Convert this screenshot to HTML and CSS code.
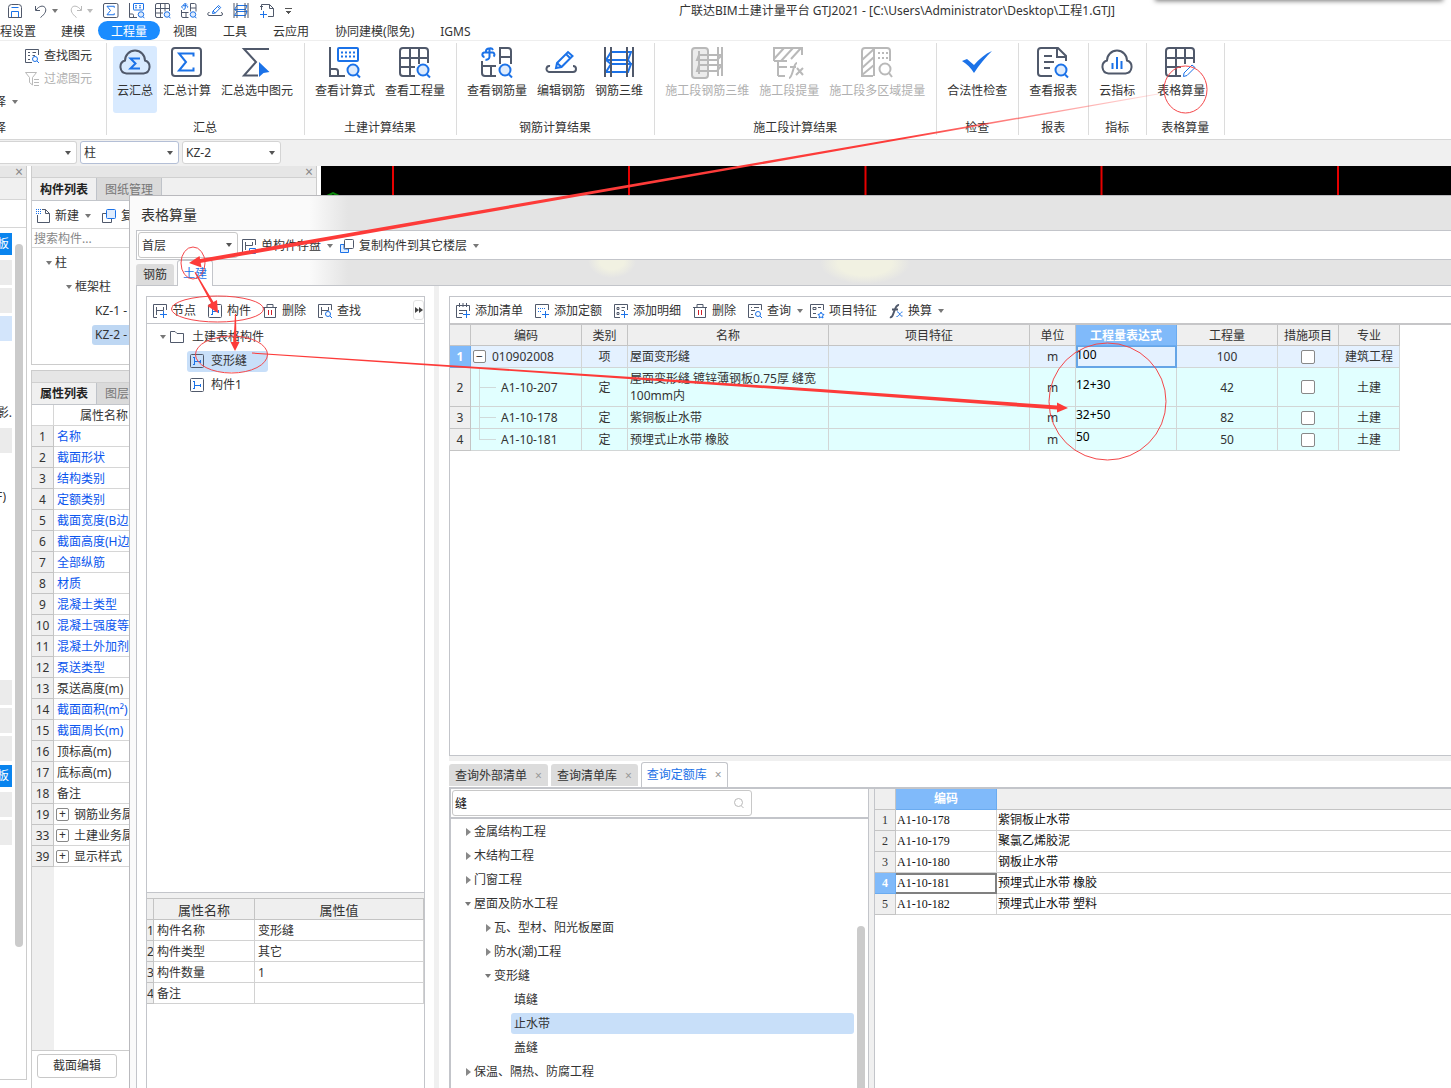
FILE: index.html
```html
<!DOCTYPE html>
<html lang="zh-CN">
<head>
<meta charset="utf-8">
<title>广联达BIM土建计量平台 GTJ2021</title>
<link rel="stylesheet" href="styles.css">
</head>
<body>
<svg class="defs" aria-hidden="true">
  <defs>
    <symbol id="mag" viewBox="0 0 32 32"><circle class="b tint" cx="24" cy="23" r="5.5"/><path class="b" d="M28 27.5l3 3"/></symbol>
    <symbol id="cloud-sigma" viewBox="0 0 32 32"><path class="d" d="M7.500 26.500A6.700 6.700 0 0 1 6 13.500A10 10 0 0 1 26 13.500A6.700 6.700 0 0 1 24.500 26.500Z"/><path class="b" d="M20 12.500V11.500H11.500L16.500 16.500L11.500 21.500H20V20.500"/></symbol>
    <symbol id="cloud-bars" viewBox="0 0 32 32"><path class="d" d="M7.500 26.500A6.700 6.700 0 0 1 6 13.500A10 10 0 0 1 26 13.500A6.700 6.700 0 0 1 24.500 26.500Z"/><path class="b" d="M11.500 16V22M16 10V22M20.500 14V22"/></symbol>
    <symbol id="sigma-box" viewBox="0 0 32 32"><rect class="d" x="1" y="1" width="29" height="28" rx="3"/><path class="b" d="M22.500 9.500V6.500H8L15 15L8 23.500H22.500V20.500"/></symbol>
    <symbol id="sigma-pick" viewBox="0 0 32 32"><path class="d" d="M28 2H3L15 15L3 28.500H17"/><path class="bf" d="M18 15L28.500 25L22.500 26L18 30Z"/></symbol>
    <symbol id="calc" viewBox="0 0 32 32"><path class="d" d="M1 0V29H16M1 22H6.500A2.500 2.500 0 0 1 9 24.500V29"/><rect class="b" x="9" y="1" width="20" height="13" rx="1"/><path class="b dots" d="M12 5.500H27M12 9.500H27"/><use href="#mag"/></symbol>
    <symbol id="grid-mag" viewBox="0 0 32 32"><path class="d" d="M16 29H4A3 3 0 0 1 1 26V4A3 3 0 0 1 4 1H26A3 3 0 0 1 29 4V16M1 11H29M1 20H16M11 1V29M20 1V17"/><use href="#mag"/></symbol>
    <symbol id="grid-pen" viewBox="0 0 32 32"><path class="d" d="M16 29H4A3 3 0 0 1 1 26V4A3 3 0 0 1 4 1H26A3 3 0 0 1 29 4V16M1 11H29M1 20H16M11 1V29M20 1V17"/><path class="b thin" d="M19 26L27 18L30 20.500L22 28.500L18.500 29.500Z"/></symbol>
    <symbol id="rebar-mag" viewBox="0 0 32 32"><path class="b" d="M5 5A3 3 0 0 1 8.500 1.500V10A3 3 0 0 1 4.500 12.500M3.500 10A2.300 2.300 0 0 1 3 5.500H12A2.300 2.300 0 0 1 12.500 9.500M8.500 1.500A3 3 0 0 1 12 3"/><path class="d" d="M19 17V1H27A3 3 0 0 1 30 4V17M19 10H30M1 14V26A3 3 0 0 0 4 29H15M1 19H15M10 19V29"/><use href="#mag"/></symbol>
    <symbol id="pen-bar" viewBox="0 0 32 32"><path class="b" d="M12 16L23 5L27.500 9L16.500 20L11 21Z M21 7L25 11M12 16L16.500 20"/><path class="d" d="M5 19A3 3 0 0 0 4 25H28A3 3 0 0 0 28 19"/></symbol>
    <symbol id="rebar-3d" viewBox="0 0 32 32"><path class="b" d="M8 5H28L25 13H3ZM8 17H28L25 25H3ZM3 13L8 17M25 13L28 17"/><path class="d" d="M2 0V30M8 0V30M24 0V30M30 0V30"/></symbol>
    <symbol id="seg-3d" viewBox="0 0 32 32"><rect class="g gt" x="1" y="1" width="16" height="30" rx="3"/><path class="g" d="M8 8H31L26 13H6ZM8 18H31L26 24H6ZM8 4V27M17 4V27M27 0V29M31 0V29"/></symbol>
    <symbol id="seg-fx" viewBox="0 0 32 32"><path class="g" d="M1 14V1H29V8M1 12L11 1M8 14L20 1M18 12L28 1M1 14H14M5 14V29M5 20H14M5 29H12"/><path class="g" d="M16 31C20 31 20 16 24 16M17 20H23M24 21L30 28M30 21L23 28"/></symbol>
    <symbol id="seg-multi" viewBox="0 0 32 32"><path class="g" d="M12 29H1V4A3 3 0 0 1 4 1H26A3 3 0 0 1 29 4V14M13 1V29M1 13L13 2M1 21L13 10M1 28L13 18"/><path class="g dots" d="M17 6H27M17 11H27"/><circle class="g" cx="24" cy="22" r="5.500"/><path class="g" d="M28 26L31 30"/></symbol>
    <symbol id="check" viewBox="0 0 32 32"><path class="bf" d="M1 14L6 12L13 18C18 12 24 7 31 4C25 10 18 18 13 26C10 21 6 17 1 14Z"/></symbol>
    <symbol id="report-mag" viewBox="0 0 32 32"><path class="d" d="M15 29H4A3 3 0 0 1 1 26V4A3 3 0 0 1 4 1H21L29 9V14M20 1V10H29M7 9H15M7 15H17M7 21H13"/><use href="#mag"/></symbol>
    <symbol id="save" viewBox="0 0 16 16"><path class="d" d="M1.500 4.500A3 3 0 0 1 4.500 1.500H11.500A3 3 0 0 1 14.500 4.500V14.500H1.500Z"/><path class="b" d="M4.500 14V8.500H11.500V14M4.500 4.500H11.500"/></symbol>
    <symbol id="undo" viewBox="0 0 16 16"><path class="d" d="M2.500 3V7.500H7M3 7C6 3 10 2 12 4.500C14 7.500 12 11 7.500 14.500"/></symbol>
    <symbol id="redo" viewBox="0 0 16 16"><path class="g" d="M13.500 3V7.500H9M13 7C10 3 6 2 4 4.500C2 7.500 4 11 8.500 14.500"/></symbol>
    <symbol id="page-plus" viewBox="0 0 16 16"><path class="d" d="M2.500 7V1.500H10.500L14.500 5.500V13.500H9M10.500 1.500V5.500H14.500M1 3.500H4"/><path class="b" d="M4.500 8V15M1 11.500H8"/></symbol>
    <symbol id="find-el" viewBox="0 0 16 16"><path class="d" d="M8 14.500H1.500V1.500H14.500V7M4 4.500H6M4 7.500H6M4 11.500H6M8.500 4.500H12M8.500 7.500H11"/><circle class="b" cx="11" cy="11" r="2.500"/><path class="b" d="M13 13L15 15"/></symbol>
    <symbol id="filter" viewBox="0 0 16 16"><path class="g" d="M1.500 1.500H12.500L8.500 6.500V14L5.500 11.500V6.500ZM10 8.500H15M10 11.500H15M10 14.500H15"/></symbol>
    <symbol id="new-page" viewBox="0 0 16 16"><path class="d" d="M2.500 7V14.500H14.500V5.500L10.500 1.500H7M10.500 1.500V5.500H14.500"/><path class="b dots2" d="M1 1.500H6M1 3.500H6M1 5.500H6"/></symbol>
    <symbol id="copy" viewBox="0 0 16 16"><path class="d" d="M5 5.500H1.500V14.500H10.500V11"/><rect class="b tint" x="5.500" y="1.500" width="9" height="9" rx="1"/></symbol>
    <symbol id="copy-to" viewBox="0 0 16 16"><path class="b tint" d="M5 6.500H1.500V14.500H9.500V11H5Z"/><rect class="d" x="5.500" y="1.500" width="9" height="9" rx="1"/></symbol>
    <symbol id="node-save" viewBox="0 0 16 16"><path class="d" d="M5 14.500H1.500V1.500H14.500V7M4.500 4V12M4.500 7.500H11.500V4"/><path class="b" d="M8.500 10.500H14.500V15.500H8.500ZM10.500 13H12.500"/></symbol>
    <symbol id="node-add" viewBox="0 0 16 16"><path class="d" d="M5 14.500H1.500V1.500H14.500V7M4.500 4V12M4.500 7.500H11.500V4"/><path class="b" d="M11.500 8V15M8 11.500H15"/></symbol>
    <symbol id="node" viewBox="0 0 16 16"><rect class="d" x="1.500" y="1.500" width="13" height="13" rx="1"/><path class="b" d="M5.500 4V12M5.500 8.500H11.500M11.500 7V10M4 4.500H6M4 11.500H6"/></symbol>
    <symbol id="node-find" viewBox="0 0 16 16"><path class="d" d="M6 14.500H1.500V1.500H14.500V7M4.500 4V12M4.500 7.500H11.500V4"/><circle class="b" cx="11" cy="11" r="2.500"/><path class="b" d="M13 13L15 15"/></symbol>
    <symbol id="trash" viewBox="0 0 16 16"><path class="d" d="M1 4.500H15M5 4V1.500H11V4M2.500 5V14.500H13.500V5"/><path class="r" d="M6.500 7V12M9.500 7V12"/></symbol>
    <symbol id="folder" viewBox="0 0 16 16"><path class="d" d="M1.500 13.500V2.500H6L8 4.500H14.500V13.500Z"/></symbol>
    <symbol id="list-add" viewBox="0 0 16 16"><path class="d" d="M7 14.500H1.500V2.500H14.500V8M4.500 0V4M8 0V4M11.500 0V4M4 7.500H12M4 10.500H8"/><path class="b" d="M11.500 8V15M8 11.500H15"/></symbol>
    <symbol id="quota-add" viewBox="0 0 16 16"><path class="d" d="M7 14.500H1.500V1.500H14.500V7"/><path class="b dots2" d="M4 5.500H12M4 8.500H8"/><path class="b" d="M11.500 8V15M8 11.500H15"/></symbol>
    <symbol id="detail-add" viewBox="0 0 16 16"><path class="d" d="M7 14.500H1.500V1.500H14.500V7M4 4.500H6V6.500H4ZM4 9.500H6V11.500H4ZM8.500 4.500H12M8.500 7.500H11"/><path class="b" d="M11.500 8V15M8 11.500H15"/></symbol>
    <symbol id="query" viewBox="0 0 16 16"><path class="d" d="M7 14.500H1.500V1.500H14.500V7M4 4.500H5M7 4.500H12M4 7.500H8M4 11.500H6"/><circle class="b" cx="11" cy="11" r="2.500"/><path class="b" d="M13 13L15 15"/></symbol>
    <symbol id="feature" viewBox="0 0 16 16"><path class="d" d="M8 14.500H1.500V1.500H14.500V7M4 4.500H7V6.500H4ZM9 4.500H12M4 10.500H7"/><path class="b" d="M12 9L13 11L15 11.500L13.500 13L14 15L12 14L10 15L10.500 13L9 11.500L11 11Z"/></symbol>
    <symbol id="fx" viewBox="0 0 16 16"><path class="d bold" d="M2 14C6 16 6 1 11 2M4 6.500H10"/><path class="b" d="M9 9C11 8 12 14 14.500 13M14.500 9C12 9 11 14 8.500 13.500"/></symbol>
    <symbol id="search" viewBox="0 0 16 16"><circle class="g" cx="7.500" cy="7.500" r="4"/><path class="g" d="M10.500 11L12.500 13"/></symbol>
  </defs>
</svg>

<header class="titlebar">
  <div class="quick">
    <svg class="i16"><use href="#save"/></svg>
    <svg class="i16"><use href="#undo"/></svg><i class="tri"></i>
    <svg class="i16"><use href="#redo"/></svg><i class="tri pale"></i>
    <svg class="i16"><use href="#sigma-box"/></svg>
    <svg class="i16"><use href="#calc"/></svg>
    <svg class="i16"><use href="#grid-mag"/></svg>
    <svg class="i16"><use href="#rebar-mag"/></svg>
    <svg class="i16"><use href="#pen-bar"/></svg>
    <svg class="i16"><use href="#rebar-3d"/></svg>
    <svg class="i16"><use href="#page-plus"/></svg>
    <i class="over"></i>
  </div>
  <div class="title">广联达BIM土建计量平台 GTJ2021 - [C:\Users\Administrator\Desktop\工程1.GTJ]</div>
</header>

<nav class="menu">
  <a href="#" class="first">程设置</a>
  <a href="#">建模</a>
  <a href="#" class="on">工程量</a>
  <a href="#">视图</a>
  <a href="#">工具</a>
  <a href="#">云应用</a>
  <a href="#">协同建模(限免)</a>
  <a href="#">IGMS</a>
</nav>

<div class="ribbon">
  <section class="group pickers">
    <button class="row"><svg class="i16"><use href="#find-el"/></svg>查找图元</button>
    <button class="row" disabled><svg class="i16"><use href="#filter"/></svg>过滤图元</button>
    <button class="row choose"><span class="cut">择</span><i class="tri"></i></button>
    <h2><span class="cut">择</span></h2>
  </section>
  <section class="group">
    <div class="tools">
      <button class="tool on"><svg><use href="#cloud-sigma"/></svg>云汇总</button>
      <button class="tool"><svg><use href="#sigma-box"/></svg>汇总计算</button>
      <button class="tool"><svg><use href="#sigma-pick"/></svg>汇总选中图元</button>
    </div>
    <h2>汇总</h2>
  </section>
  <section class="group">
    <div class="tools">
      <button class="tool"><svg><use href="#calc"/></svg>查看计算式</button>
      <button class="tool"><svg><use href="#grid-mag"/></svg>查看工程量</button>
    </div>
    <h2>土建计算结果</h2>
  </section>
  <section class="group">
    <div class="tools">
      <button class="tool"><svg><use href="#rebar-mag"/></svg>查看钢筋量</button>
      <button class="tool"><svg><use href="#pen-bar"/></svg>编辑钢筋</button>
      <button class="tool"><svg><use href="#rebar-3d"/></svg>钢筋三维</button>
    </div>
    <h2>钢筋计算结果</h2>
  </section>
  <section class="group">
    <div class="tools">
      <button class="tool" disabled><svg><use href="#seg-3d"/></svg>施工段钢筋三维</button>
      <button class="tool" disabled><svg><use href="#seg-fx"/></svg>施工段提量</button>
      <button class="tool" disabled><svg><use href="#seg-multi"/></svg>施工段多区域提量</button>
    </div>
    <h2>施工段计算结果</h2>
  </section>
  <section class="group">
    <div class="tools"><button class="tool"><svg><use href="#check"/></svg>合法性检查</button></div>
    <h2>检查</h2>
  </section>
  <section class="group">
    <div class="tools"><button class="tool"><svg><use href="#report-mag"/></svg>查看报表</button></div>
    <h2>报表</h2>
  </section>
  <section class="group">
    <div class="tools"><button class="tool"><svg><use href="#cloud-bars"/></svg>云指标</button></div>
    <h2>指标</h2>
  </section>
  <section class="group last">
    <div class="tools"><button class="tool"><svg><use href="#grid-pen"/></svg>表格算量</button></div>
    <h2>表格算量</h2>
  </section>
</div>

<div class="selectors">
  <span class="combo floor"><select aria-label="楼层"><option></option></select></span>
  <span class="combo focus"><select aria-label="构件类型"><option>柱</option></select></span>
  <span class="combo"><select aria-label="构件"><option>KZ-2</option></select></span>
</div>

<main class="work">
  <aside class="nav-strip">
    <div class="grip"><button aria-label="关闭">×</button></div>
    <div class="strip-head"></div>
    <div class="strip-sub"></div>
    <div class="strip-body">
      <ul>
        <li class="blue"><span class="cut">板</span></li><li class="bar"></li><li class="bar"></li><li class="bar sel"></li>
        <li></li><li></li><li><span class="cut">影.</span></li><li class="bar"></li><li></li><li><span class="cut short">F)</span></li>
        <li></li><li></li><li></li><li></li><li></li><li></li>
        <li class="bar"></li><li class="bar"></li><li class="bar"></li><li class="blue"><span class="cut">板</span></li><li class="bar"></li><li class="bar"></li>
      </ul>
      <div class="thumb"></div>
    </div>
  </aside>

  <div class="side">
    <section class="panel list-panel">
      <div class="grip"><button aria-label="关闭">×</button></div>
      <div class="ptabs"><button class="on">构件列表</button><button>图纸管理</button></div>
      <div class="pbar">
        <button class="row"><svg class="i16"><use href="#new-page"/></svg>新建<i class="tri"></i></button>
        <button class="row"><svg class="i16"><use href="#copy"/></svg>复制</button>
      </div>
      <input class="psearch" type="text" placeholder="搜索构件..." aria-label="搜索构件">
      <ul class="ptree">
        <li class="l1"><i class="tri"></i>柱</li>
        <li class="l2"><i class="tri"></i>框架柱</li>
        <li class="l3"><span>KZ-1 -</span></li>
        <li class="l3"><span class="sel">KZ-2 -</span></li>
      </ul>
    </section>
    <section class="panel attr-panel">
      <div class="grip"></div>
      <div class="ptabs"><button class="on">属性列表</button><button>图层管理</button></div>
      <div class="attr-scroll">
        <table class="attrs">
          <colgroup><col class="c-n"><col class="c-name"><col></colgroup>
          <tr><th></th><th class="h">属性名称</th><th class="h">属性值</th></tr>
          <tr class="k"><th>1</th><td>名称</td><td></td></tr>
          <tr class="k"><th>2</th><td>截面形状</td><td></td></tr>
          <tr class="k"><th>3</th><td>结构类别</td><td></td></tr>
          <tr class="k"><th>4</th><td>定额类别</td><td></td></tr>
          <tr class="k"><th>5</th><td>截面宽度(B边)</td><td></td></tr>
          <tr class="k"><th>6</th><td>截面高度(H边)</td><td></td></tr>
          <tr class="k"><th>7</th><td>全部纵筋</td><td></td></tr>
          <tr class="k"><th>8</th><td>材质</td><td></td></tr>
          <tr class="k"><th>9</th><td>混凝土类型</td><td></td></tr>
          <tr class="k"><th>10</th><td>混凝土强度等级</td><td></td></tr>
          <tr class="k"><th>11</th><td>混凝土外加剂</td><td></td></tr>
          <tr class="k"><th>12</th><td>泵送类型</td><td></td></tr>
          <tr><th>13</th><td>泵送高度(m)</td><td></td></tr>
          <tr class="k"><th>14</th><td>截面面积(m²)</td><td></td></tr>
          <tr class="k"><th>15</th><td>截面周长(m)</td><td></td></tr>
          <tr><th>16</th><td>顶标高(m)</td><td></td></tr>
          <tr><th>17</th><td>底标高(m)</td><td></td></tr>
          <tr><th>18</th><td>备注</td><td></td></tr>
          <tr><th>19</th><td><button class="fold">+</button>钢筋业务属性</td><td></td></tr>
          <tr><th>33</th><td><button class="fold">+</button>土建业务属性</td><td></td></tr>
          <tr><th>39</th><td><button class="fold">+</button>显示样式</td><td></td></tr>
        </table>
      </div>
      <div class="attr-foot"><button class="btn">截面编辑</button></div>
    </section>
  </div>

  <div class="canvas">
    <svg width="1130" height="40" aria-hidden="true">
      <path class="axis" d="M72 0V40M308 0V40M544.500 0V40M780.500 0V40M1017 0V40"/>
      <path class="mark" d="M6 30L12 27L18 30"/>
    </svg>
  </div>
</main>

<section class="dialog" role="dialog" aria-label="表格算量">
  <h1>表格算量</h1>
  <div class="dbar">
    <span class="combo"><select aria-label="楼层"><option>首层</option></select></span>
    <button class="row"><svg class="i16"><use href="#node-save"/></svg>单构件存盘<i class="tri"></i></button>
    <button class="row"><svg class="i16"><use href="#copy-to"/></svg>复制构件到其它楼层<i class="tri"></i></button>
  </div>
  <div class="dtabs"><button>钢筋</button><button class="on">土建</button></div>
  <div class="page">
    <div class="left">
      <div class="lbar">
        <button class="row"><svg class="i16"><use href="#node-add"/></svg>节点</button>
        <button class="row"><svg class="i16"><use href="#node"/></svg>构件</button>
        <button class="row"><svg class="i16"><use href="#trash"/></svg>删除</button>
        <button class="row"><svg class="i16"><use href="#node-find"/></svg>查找</button>
        <button class="more" aria-label="更多"><i class="rt dark"></i><i class="rt dark"></i></button>
      </div>
      <ul class="ltree">
        <li class="root"><i class="tri"></i><svg class="i16"><use href="#folder"/></svg>土建表格构件</li>
        <li><span class="sel"><svg class="i16"><use href="#node"/></svg>变形缝</span></li>
        <li><span><svg class="i16"><use href="#node"/></svg>构件1</span></li>
      </ul>
      <div class="lprops">
        <table>
          <colgroup><col class="c-n"><col class="c-name"><col></colgroup>
          <tr><th></th><th class="h">属性名称</th><th class="h">属性值</th></tr>
          <tr><th>1</th><td>构件名称</td><td>变形缝</td></tr>
          <tr><th>2</th><td>构件类型</td><td>其它</td></tr>
          <tr><th>3</th><td>构件数量</td><td>1</td></tr>
          <tr><th>4</th><td>备注</td><td></td></tr>
        </table>
      </div>
    </div>
    <div class="split"></div>
    <div class="right">
      <div class="upper">
        <div class="rbar">
          <button class="row"><svg class="i16"><use href="#list-add"/></svg>添加清单</button>
          <button class="row"><svg class="i16"><use href="#quota-add"/></svg>添加定额</button>
          <button class="row"><svg class="i16"><use href="#detail-add"/></svg>添加明细</button>
          <button class="row"><svg class="i16"><use href="#trash"/></svg>删除</button>
          <button class="row"><svg class="i16"><use href="#query"/></svg>查询<i class="tri"></i></button>
          <button class="row"><svg class="i16"><use href="#feature"/></svg>项目特征</button>
          <button class="row"><svg class="i16"><use href="#fx"/></svg>换算<i class="tri"></i></button>
        </div>
        <table class="bill">
          <colgroup><col class="w21"><col class="w111"><col class="w46"><col class="w201"><col class="w201"><col class="w46"><col class="w101"><col class="w101"><col class="w61"><col class="w61"></colgroup>
          <thead><tr><th></th><th>编码</th><th>类别</th><th>名称</th><th>项目特征</th><th>单位</th><th class="hot">工程量表达式</th><th>工程量</th><th>措施项目</th><th>专业</th></tr></thead>
          <tbody>
            <tr class="item"><th class="hot">1</th><td class="code"><div><button class="fold">−</button>010902008</div></td><td>项</td><td class="name">屋面变形缝</td><td></td><td>m</td><td class="expr active">100</td><td>100</td><td><input type="checkbox" aria-label="措施项目 1"></td><td>建筑工程</td></tr>
            <tr class="tall"><th>2</th><td class="code"><div><i class="elbow"></i>A1-10-207</div></td><td>定</td><td class="name">屋面变形缝 镀锌薄钢板0.75厚 缝宽100mm内</td><td></td><td>m</td><td class="expr">12+30</td><td>42</td><td><input type="checkbox" aria-label="措施项目 2"></td><td>土建</td></tr>
            <tr><th>3</th><td class="code"><div><i class="elbow"></i>A1-10-178</div></td><td>定</td><td class="name">紫铜板止水带</td><td></td><td>m</td><td class="expr">32+50</td><td>82</td><td><input type="checkbox" aria-label="措施项目 3"></td><td>土建</td></tr>
            <tr><th>4</th><td class="code"><div><i class="elbow end"></i>A1-10-181</div></td><td>定</td><td class="name">预埋式止水带 橡胶</td><td></td><td>m</td><td class="expr">50</td><td>50</td><td><input type="checkbox" aria-label="措施项目 4"></td><td>土建</td></tr>
          </tbody>
        </table>
      </div>
      <div class="hsplit"></div>
      <div class="qtabs">
        <button>查询外部清单<span>×</span></button>
        <button>查询清单库<span>×</span></button>
        <button class="on">查询定额库<span>×</span></button>
      </div>
      <div class="lower">
        <div class="lib">
          <div class="libsearch"><label><input type="text" value="缝" aria-label="搜索定额"><svg class="i16"><use href="#search"/></svg></label></div>
          <div class="libbody">
            <ul>
              <li><i class="rt"></i>金属结构工程</li>
              <li><i class="rt"></i>木结构工程</li>
              <li><i class="rt"></i>门窗工程</li>
              <li><i class="tri"></i>屋面及防水工程</li>
              <li class="l2"><i class="rt"></i>瓦、型材、阳光板屋面</li>
              <li class="l2"><i class="rt"></i>防水(潮)工程</li>
              <li class="l2"><i class="tri"></i>变形缝</li>
              <li class="l3"><span>填缝</span></li>
              <li class="l3"><span class="sel">止水带</span></li>
              <li class="l3"><span>盖缝</span></li>
              <li><i class="rt"></i>保温、隔热、防腐工程</li>
            </ul>
            <div class="thumb"></div>
          </div>
        </div>
        <div class="vsplit"></div>
        <div class="quota">
          <table>
            <colgroup><col class="w21"><col class="w101"><col></colgroup>
            <thead><tr><th></th><th class="hot">编码</th><th></th></tr></thead>
            <tbody>
              <tr><th>1</th><td>A1-10-178</td><td>紫铜板止水带</td></tr>
              <tr><th>2</th><td>A1-10-179</td><td>聚氯乙烯胶泥</td></tr>
              <tr><th>3</th><td>A1-10-180</td><td>钢板止水带</td></tr>
              <tr><th class="hot">4</th><td class="active">A1-10-181</td><td>预埋式止水带 橡胶</td></tr>
              <tr><th>5</th><td>A1-10-182</td><td>预埋式止水带 塑料</td></tr>
            </tbody>
          </table>
        </div>
      </div>
    </div>
  </div>
</section>

<div class="float-shadow"></div>

<svg class="notes" width="1451" height="1088" aria-hidden="true">
  <defs>
    <linearGradient id="fade" gradientUnits="userSpaceOnUse" x1="1160" y1="94" x2="900" y2="140"><stop offset="0" stop-color="#fd3b39" stop-opacity=".15"/><stop offset="1" stop-color="#fd3b39"/></linearGradient>
  </defs>
  <g class="ring">
    <ellipse cx="1185.500" cy="89.500" rx="21.500" ry="23.500"/>
    <ellipse cx="193" cy="263" rx="12" ry="16"/>
    <ellipse cx="217.500" cy="309" rx="46" ry="13"/>
    <ellipse cx="231.500" cy="354.500" rx="36" ry="18.500"/>
    <ellipse cx="1107.500" cy="401.500" rx="58.500" ry="58.500"/>
  </g>
  <path fill="url(#fade)" d="M1158 93.500L450 215.500L200 259V263L450 219L1158 94.500Z"/>
  <g class="solid">
    <path d="M189 263L199.500 256L201.500 267.500Z"/>
    <path d="M194.500 272.500L211 303L207.500 306L218 313L217 300L213.500 302L195.500 272Z"/>
    <path d="M235 314L233.500 342L230.500 342L235 351L239.500 342L236.500 342L236 314Z"/>
    <path d="M252 352.500L820 389L1057 405.500V402.500L1068 408L1057 412.500V409.500L820 392L252 353.500Z"/>
  </g>
</svg>
</body>
</html>
```
FILE: styles.css
```css
* { box-sizing: border-box; }
html, body { height: 100%; }
body {
  margin: 0;
  display: flex;
  flex-direction: column;
  overflow: hidden;
  position: relative;
  background: #fff;
  color: #333;
  font: 12px/16px "Noto Sans", "Noto Sans CJK SC", sans-serif;
}
button, input, select { font: inherit; color: inherit; }
button { background: none; border: 0; padding: 0; white-space: nowrap; }
ul { list-style: none; margin: 0; padding: 0; }
h1, h2 { margin: 0; font: inherit; }
table { border-collapse: separate; border-spacing: 0; table-layout: fixed; }
th, td { padding: 0; font-weight: normal; overflow: hidden; white-space: nowrap; }
.defs { display: none; }

/* icon strokes: 2px on the ribbon, 1px on small icons */
.d, .b, .g, .r { fill: none; stroke: #50596b; stroke-width: var(--line, 2px); vector-effect: non-scaling-stroke; }
.b { stroke: #1b72e8; }
.g { stroke: #b9b9b9; }
.r { stroke: #d0202a; }
.tint { fill: #dfecfd; }
.gt { fill: #ececec; }
.bf { fill: #1b72e8; }
.dots { stroke-dasharray: 2 2; }
.dots2 { stroke-dasharray: 1 1; }
.thin { stroke-width: 1px; }
.bold { stroke-width: 2px; }
svg { flex: none; }
.i16 { --line: 1px; width: 16px; height: 16px; }

.tri { flex: none; width: 0; height: 0; border: 3px solid transparent; border-top: 4px solid #777; border-bottom: 0; }
.tri.pale { border-top-color: #bbb; }
.rt { flex: none; width: 0; height: 0; border: 4px solid transparent; border-left: 5px solid #888; border-right: 0; }
.rt.dark { border-width: 3px; border-left: 4px solid #444; border-right: 0; }

/* text that runs out past the left edge of its box */
.cut { display: flex; justify-content: flex-end; overflow: hidden; white-space: nowrap; }

.row { display: flex; align-items: center; gap: 4px; padding-top: 2px; }
.row:disabled, .tool:disabled { color: #b0b0b0; }
.row .tri { margin-left: 2px; }

/* title bar */
.titlebar { flex: none; display: flex; align-items: center; height: 21px; }
.quick { flex: 0 0 343px; display: flex; align-items: center; gap: 10px; padding-left: 7px; }
.quick .tri { margin: 0 0 0 -7px; }
.over { width: 7px; height: 6px; border-top: 1px solid #555; background: conic-gradient(from -45deg at 50% 100%, #555 90deg, transparent 0) 0 2px / 6px 3px no-repeat; }
.over { background: linear-gradient(#555, #555) 1px 2px / 5px 1px no-repeat, linear-gradient(#555, #555) 2px 3px / 3px 1px no-repeat, linear-gradient(#555, #555) 3px 4px / 1px 1px no-repeat; }
.title { flex: 1; text-align: center; }

.menu { flex: none; display: flex; height: 20px; border-bottom: 1px solid #eee; }
.menu a { padding: 1px 13px 0; line-height: 19px; color: #333; text-decoration: none; white-space: nowrap; }
.menu .first { padding-left: 0; width: 48px; }
.menu .on { background: #1a8cff; color: #fff; border-radius: 10px; }

/* ribbon */
.ribbon { flex: none; display: flex; height: 99px; padding: 2px 0 4px; border-bottom: 1px solid #d6d6d6; }
.group { flex: none; display: flex; flex-direction: column; padding: 3px 7px 0 6px; border-right: 1px solid #dcdcdc; }
.group h2 { margin-top: auto; text-align: center; line-height: 14px; }
.group.last { min-width: 78px; }
.tools { display: flex; gap: 2px; }
.tool { display: flex; flex-direction: column; align-items: center; gap: 4px; height: 67px; padding: 1px 4px 0; border-radius: 3px; }
.tool svg { width: 32px; height: 32px; }
.tool.on { background: #d8eaff; }
.pickers { width: 107px; padding: 0; }
.pickers .row { height: 23px; padding-left: 24px; }
.pickers .choose { padding-left: 0; gap: 4px; }
.choose .cut, .pickers h2 .cut { width: 6px; }

.selectors { flex: none; display: flex; gap: 3px; height: 26px; padding: 1px 0 2px; background: #f0f0f0; }
.combo { display: flex; align-items: center; width: 99px; height: 23px; padding-right: 5px; background: #fff; border: 1px solid #d4d4d4; border-radius: 3px; }
.combo select { flex: 1; min-width: 0; appearance: none; border: 0; padding: 0 3px; background: none; outline: 0; }
.combo::after { content: ""; border: 3px solid transparent; border-top: 4px solid #555; border-bottom: 0; }
.combo.focus { border-color: #b4bfd6; }
.combo.floor { width: 77px; border-left: 0; border-radius: 0 3px 3px 0; }

/* workspace behind the dialog */
.work { flex: 1; min-height: 0; display: flex; }
.grip { flex: none; height: 12px; display: flex; justify-content: flex-end; align-items: center; background: #e6e6e6; border-bottom: 1px solid #d0d0d0; }
.grip button { width: 14px; line-height: 10px; color: #888; font-size: 14px; }
.nav-strip { flex: 0 0 27px; min-width: 0; display: flex; flex-direction: column; margin-bottom: 8px; border-right: 1px solid #ccc; border-bottom: 1px solid #ccc; }
.strip-head { height: 22px; background: #f0f0f0; border-bottom: 1px solid #d6d6d6; }
.strip-sub { height: 28px; border-bottom: 1px solid #d6d6d6; }
.strip-body { flex: 1; min-height: 0; display: flex; gap: 3px; padding-top: 4px; }
.strip-body ul { flex: 0 0 12px; min-width: 0; }
.strip-body li { height: 25px; margin-bottom: 3px; line-height: 25px; }
.strip-body .cut { width: 12px; }
.strip-body .bar { background: #ebebeb; }
.strip-body .sel { background: #d3e5fb; }
.strip-body .blue { background: #0a84ee; color: #fff; border: solid #fff; border-width: 1px 0 2px; line-height: 22px; }
.strip-body .blue .cut { width: 9px; }
.strip-body .short { width: 6px; }
.strip-body .thumb { width: 8px; height: 703px; margin-top: 12px; border-radius: 4px; background: #cbcbcb; }

.side { flex: 0 0 286px; display: flex; flex-direction: column; gap: 5px; margin: 0 4px; }
.panel { display: flex; flex-direction: column; border: 1px solid #ccc; border-top: 0; }
.list-panel { flex: 0 0 199px; }
.attr-panel { flex: 1; border-top: 1px solid #ccc; border-bottom: 0; min-height: 0; }
.ptabs { flex: none; display: flex; height: 23px; background: #f0f0f0; border-bottom: 1px solid #c3c6cb; }
.ptabs button { width: 65px; padding-top: 1px; background: #dadada; color: #777; border-right: 1px solid #bfc3c9; }
.ptabs .on { background: #f0f0f0; color: #222; font-weight: bold; }
.attr-panel .ptabs { height: 22px; }
.pbar { flex: none; display: flex; align-items: center; gap: 10px; height: 28px; padding-left: 3px; border-bottom: 1px solid #d6d6d6; }
.psearch { flex: none; height: 19px; padding: 0 2px; border: 0; border-bottom: 1px solid #d6d6d6; outline: 0; }
.psearch::placeholder { color: #888; }
.ptree { padding-top: 3px; }
.ptree li { display: flex; align-items: center; gap: 3px; height: 24px; }
.ptree .l1 { padding-left: 14px; }
.ptree .l2 { padding-left: 34px; }
.ptree .l3 { padding-left: 60px; }
.ptree .l3 span { flex: 1; padding: 2px 3px; border-radius: 3px; }
.sel { background: #c8dff9; }
.ptree .l3 .sel { background: #bed7f3; }
.attr-scroll { flex: 1; min-height: 0; background: linear-gradient(90deg, #efefef 22px, #fff 22px); border-bottom: 1px solid #ccc; }
.attrs { width: 100%; }
.attrs .c-n { width: 22px; }
.attrs .c-name { width: 101px; }
.attrs th, .attrs td { height: 21px; padding-top: 1px; border-right: 1px solid #d6d6d6; border-bottom: 1px solid #d6d6d6; }
.attrs th { background: #efefef; border-color: #c4c4c4; text-align: center; }
.attrs tr:first-child th { background: #fff; border-color: #d6d6d6; }
.attrs td { padding-left: 3px; }
.attrs .k td { color: #0a55ee; }
.attr-foot { flex: 0 0 37px; padding: 3px 5px; }
.btn { width: 80px; height: 24px; border: 1px solid #c8c8c8; border-radius: 3px; }
.fold { width: 13px; height: 13px; margin: 0 6px 0 0; border: 1px solid #888; border-radius: 2px; background: #fff; line-height: 10px; vertical-align: middle; text-align: center; overflow: hidden; }
.attrs .fold { margin: -2px 5px 0 -1px; }
.canvas { flex: 1; min-width: 0; overflow: hidden; background: #000; }
.axis { stroke: #e60000; stroke-width: 2px; }
.mark { stroke: #0a8a0a; stroke-width: 2px; fill: none; }

/* dialog window */
.dialog {
  position: absolute;
  top: 195px;
  left: 129px;
  right: 0;
  bottom: 0;
  display: flex;
  flex-direction: column;
  padding-left: 6px;
  border: solid #b9b9bd;
  border-width: 1px 0 0 1px;
  background:
    radial-gradient(closest-side, #f1f1e2 50%, transparent) 458px 48px / 48px 34px no-repeat,
    radial-gradient(closest-side, #f1f1e2 60%, transparent) 690px 46px / 90px 42px no-repeat,
    linear-gradient(90deg, #fafafa 180px, #e4e4e4 218px);
}
.dialog h1 { flex: none; height: 34px; padding: 2px 5px 0; font-size: 14px; line-height: 34px; }
.dbar { flex: none; display: flex; align-items: center; gap: 6px; height: 30px; padding-left: 1px; background: #fff; border: 1px solid #c3c5ca; border-right: 0; }
.dbar .combo { height: 26px; width: 100px; margin-right: -3px; border-color: #c8c8c8; }
.dbar select { padding-top: 2px; }
.dtabs { flex: none; display: flex; align-items: flex-end; height: 25px; }
.dtabs button { height: 21px; width: 38px; margin-right: 3px; background: #dcdcdc; border-radius: 3px 3px 0 0; }
.dtabs .on { position: relative; height: 26px; width: 36px; margin-bottom: -1px; background: #fff; color: #1b72e8; border: 1px solid #c3c5ca; border-bottom: 0; }
.page { flex: 1; min-height: 0; display: flex; background: #fff; border: 1px solid #c3c5ca; border-width: 1px 0 0 1px; }

.left { flex: 0 0 279px; display: flex; flex-direction: column; margin: 10px 9px 0; }
.lbar { flex: none; display: flex; align-items: center; gap: 11px; height: 28px; padding-left: 5px; border: 1px solid #c3c5ca; }
.more { display: flex; align-items: center; justify-content: center; width: 11px; height: 20px; margin-left: auto; border: 1px solid #e2e2e2; border-radius: 3px; }
.ltree { flex: 1; min-height: 0; padding-top: 1px; border: 1px solid #c3c5ca; border-top: 0; }
.ltree li { display: flex; align-items: center; height: 24px; padding-left: 40px; }
.ltree .root { padding-left: 13px; gap: 3px; }
.ltree .root svg { margin-right: 4px; }
.ltree span { display: flex; align-items: center; gap: 6px; width: 81px; height: 21px; padding-left: 2px; border-radius: 3px; }
.lprops { flex: 0 0 195px; border: 1px solid #c3c5ca; border-width: 0 1px; }
.lprops::before { content: ""; display: block; height: 5px; background: #f0f0f0; }
.lprops table { width: 100%; border-top: 1px solid #c4c4c4; }
.lprops .c-n { width: 7px; }
.lprops .c-name { width: 101px; }
.lprops th, .lprops td { height: 21px; padding-top: 1px; border-right: 1px solid #d2d2d2; border-bottom: 1px solid #d2d2d2; }
.lprops th { background: #efefef; border-color: #c4c4c4; }
.lprops .h { font-size: 13px; }
.lprops td { padding-left: 3px; }
.split { flex: 0 0 5px; background: #f0f0f0; }

.right { flex: 1; min-width: 0; display: flex; flex-direction: column; margin: 10px 0 0 10px; }
.upper { flex: 1; min-height: 0; border: 1px solid #c3c5ca; border-right: 0; }
.rbar { display: flex; align-items: center; gap: 11px; height: 28px; padding-left: 5px; border-bottom: 2px solid #c6c6c8; }
.rbar .row .tri { margin: 0 -5px 0 2px; }
.w21 { width: 21px; }
.w46 { width: 46px; }
.w61 { width: 61px; }
.w101 { width: 101px; }
.w111 { width: 111px; }
.w201 { width: 201px; }
.bill { width: 950px; }
.bill th, .bill td { height: 22px; border: solid #d2d6d6; border-width: 0 1px 1px 0; text-align: center; line-height: 17px; }
.bill thead th { height: 21px; }
.bill th { background: #efefef; border-color: #c4c4c4; }
.bill td { background: #e1ffff; }
.bill .item td { background: #e4f1ff; }
.bill .tall td { height: 39px; }
.bill .name { padding: 0 2px; text-align: left; white-space: normal; }
.bill .expr { padding-bottom: 6px; text-align: left; line-height: 15px; color: #000; }
.bill .active { padding: 0 0 4px; border: 2px solid #65a5e6; border-width: 1px 2px 2px 0; box-shadow: inset 2px 0 #65a5e6; }
.bill .code div { display: flex; align-items: center; height: 21px; padding-left: 8px; }
.bill .tall .code div { height: 38px; }
.bill .item .code div { padding-left: 2px; }
.elbow { align-self: stretch; width: 17px; margin-right: 5px; background: linear-gradient(#d0dada, #d0dada) 0 0 / 1px 100% no-repeat, linear-gradient(#d0dada, #d0dada) 0 50% / 100% 1px no-repeat; }
.elbow.end { background-size: 1px 50%, 100% 1px; }
th.hot, .bill th.hot, .quota th.hot { background: #80bafa; color: #fff; font-weight: bold; border-color: #6aabf0; }
.bill input { appearance: none; display: block; width: 14px; height: 14px; margin: 0 auto; border: 1px solid #888; border-radius: 2px; background: #fff; }

.hsplit { flex: 0 0 5px; background: #f0f0f0; }
.qtabs { flex: none; display: flex; align-items: flex-end; gap: 3px; height: 28px; padding-top: 1px; border-bottom: 2px solid #c3c5ca; }
.qtabs button { height: 22px; padding: 2px 6px 0; margin-bottom: 1px; background: #dcdcdc; border-radius: 3px 3px 0 0; }
.qtabs .on { height: 25px; margin-bottom: 0; padding: 0 5px; background: #fff; color: #1b72e8; border: 1px solid #c3c5ca; border-bottom: 0; }
.qtabs span { margin-left: 8px; color: #999; }

.lower { flex: 0 0 299px; display: flex; min-height: 0; }
.lib { flex: 0 0 420px; display: flex; flex-direction: column; border: solid #c3c5ca; border-width: 0 1px 0 2px; }
.libsearch { flex: none; height: 30px; padding: 1px; border-bottom: 2px solid #c3c5ca; }
.libsearch label { display: flex; align-items: center; width: 300px; height: 26px; padding: 0 4px 0 2px; border: 1px solid #c8c8c8; border-radius: 3px; }
.libsearch input { flex: 1; min-width: 0; padding: 2px 0 0; border: 0; outline: 0; color: #111; }
.libbody { flex: 1; display: flex; min-height: 0; overflow: hidden; }
.libbody ul { flex: 1; }
.libbody li { display: flex; align-items: center; height: 24px; padding: 2px 0 0 15px; }
.libbody .rt { margin-right: 3px; }
.libbody .tri { margin: 0 3px 0 -1px; }
.libbody .l2 { padding-left: 35px; }
.libbody .l3 { padding: 0 0 0 60px; }
.libbody .l3 span { flex: 1; height: 21px; padding: 2px 3px; border-radius: 3px; line-height: 18px; }
.libbody .thumb { width: 8px; height: 180px; margin: 107px 3px 0 3px; border-radius: 4px 4px 0 0; background: #cbcbcb; }
.vsplit { flex: 0 0 5px; background: #f0f0f0; }
.quota { flex: 1; min-width: 0; border-left: 1px solid #c3c5ca; font-family: "Liberation Serif", "Noto Sans CJK SC", serif; }
.quota table { width: 100%; }
.quota th, .quota td { height: 21px; border: solid #d2d2d2; border-width: 0 1px 1px 0; }
.quota th { background: #efefef; border-color: #c4c4c4; }
.quota td { padding: 0 1px 1px; color: #111; }
.quota th:last-child, .quota td:last-child { border-right: 0; }
.quota .active { padding: 0 1px 1px; border: 2px solid #808080; border-left-width: 0; line-height: 15px; }

/* lower edge of a window above the screen */
.float-shadow { position: absolute; top: -8px; right: 9px; width: 286px; height: 8px; box-shadow: 0 0 5px 1px #777; }

/* hand-drawn annotations over everything */
.notes { position: absolute; top: 0; left: 0; pointer-events: none; }
.ring { fill: none; stroke: #f4474a; stroke-width: 1px; }
.solid { fill: #fd3b39; }
```
